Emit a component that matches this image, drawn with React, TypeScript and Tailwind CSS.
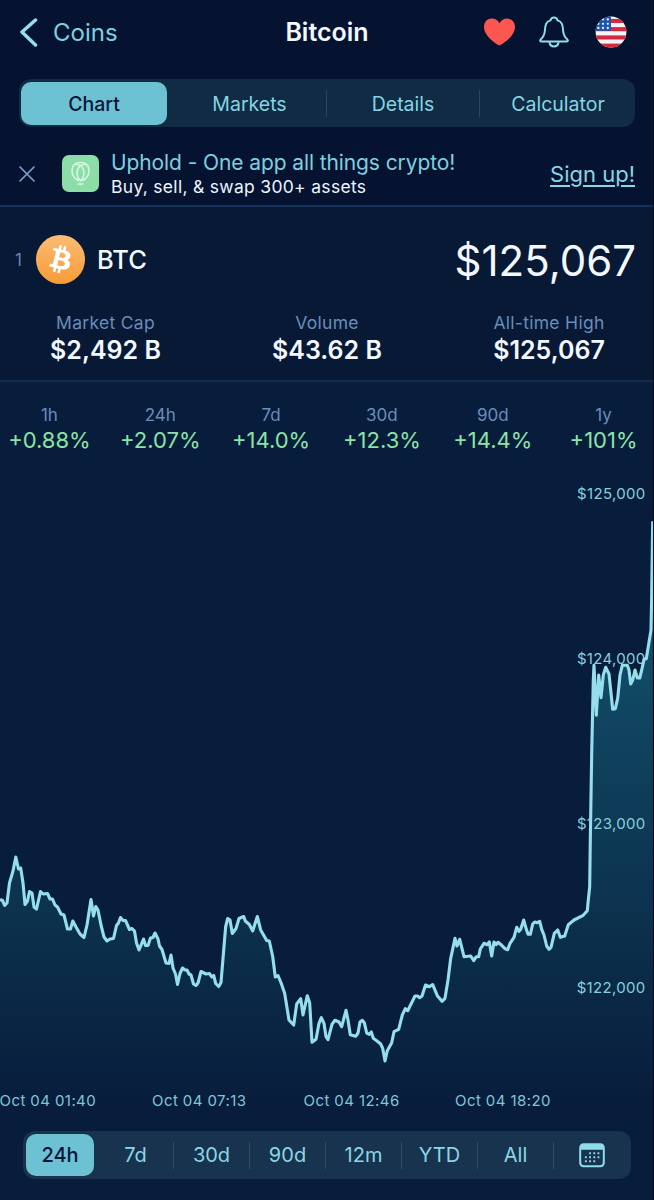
import React from "react";
import { SiBitcoin } from "react-icons/si";
import clsx from "clsx";

const TABS = ["Chart", "Markets", "Details", "Calculator"];

const STATS = [
  { label: "Market Cap", value: "$2,492 B" },
  { label: "Volume", value: "$43.62 B" },
  { label: "All-time High", value: "$125,067" },
];

const CHANGES = [
  { label: "1h", value: "+0.88%" },
  { label: "24h", value: "+2.07%" },
  { label: "7d", value: "+14.0%" },
  { label: "30d", value: "+12.3%" },
  { label: "90d", value: "+14.4%" },
  { label: "1y", value: "+101%" },
];

const RANGES = ["24h", "7d", "30d", "90d", "12m", "YTD", "All"];

const Y_LABELS = [
  { text: "$125,000", y: 499 },
  { text: "$124,000", y: 664 },
  { text: "$123,000", y: 828.5 },
  { text: "$122,000", y: 993 },
];

const X_LABELS = [
  { text: "Oct 04 01:40", x: -0.5 },
  { text: "Oct 04 07:13", x: 152 },
  { text: "Oct 04 12:46", x: 303.5 },
  { text: "Oct 04 18:20", x: 455 },
];

const LINE =
  "0,899.5 2.5,900.5 4.7,905.3 7,903 9.5,883 13,871 15.8,857 18.5,869 20.7,868 23,883 25,904.5 27.5,901 29.5,891.5 32,893 34,907 36.5,909 40.5,891.5 43,894 47.5,893.5 50,899 52.5,899 55,905 57.5,907 61,914 64,915 67.5,929 70.5,929 72.8,921 76,927 80,934 84,937.5 87,925 91,899.5 93.5,916 95.8,906.5 98,910 101,925 104,937 107,941 110,939 113.5,938.5 116.5,925.5 118.5,923 120.5,917.5 123,920.5 125.5,920.5 129.5,929.5 132,928.5 134.5,931 136.5,943 139,950 143.5,939 145.5,945.5 148,945.5 150.5,938 153,937.5 155,933 158,939 159.5,946 162,949.5 166,963 169,963.5 171,955 173,968 175.5,974 177.5,984.5 180,973.5 182.5,968 185,970 187,970 189,974 191,975 193.5,984 196,985.5 198,983 201,971.5 206,974 209.5,973.5 " +
  "211.7,977 213.7,975.5 215.7,983.5 218.7,986.5 221,982.5 224,946.5 225.7,926.5 227.7,918.5 230,920 232.3,933.5 236,928.5 239,918.5 243.7,916.5 245.3,921 249.3,924.5 252.7,931 257.3,916.5 260.7,930 266.7,940.5 269.3,941 272.7,956.5 275.3,977 278,975.5 281.3,983.5 284.7,993.5 289,1020 293.7,1025 296.7,1004 300.7,998.7 303,1015 307.3,995.7 309.7,1003 312,1042.3 316,1039.3 319,1023.3 321.3,1017.7 324,1023.3 326,1036.7 328,1039.7 332,1024.3 335,1020.3 339,1022 341.7,1026.7 346,1010.3 348,1020 350.3,1034.7 355.7,1036.3 358,1033 360,1022 362.3,1020.3 364.3,1022.7 366.7,1033 369.3,1034.3 371.3,1032 373.3,1038.3 376.7,1040.7 380.7,1044 382.7,1048.3 385,1061 387.3,1050.7 391.7,1042.7 394,1031.7 398.7,1029.3 402.3,1015 405.3,1008.7 407.7,1010.7 415,996 417.5,996 419.7,997.7 422,996 425.5,985 " +
  "429.3,986.7 432.7,984.7 437.3,995.7 442,1001.3 445,998.3 448,980 450.7,958.3 455,938.3 457,946 459.7,939.3 464,956.7 470.7,956 473.7,960.7 476.3,956.7 478.7,956.7 480.3,949 484,943.3 487.3,944.7 489.3,942 491.7,956 494,942 496,944.7 498,942.3 501.7,945.3 505,948.7 507.7,949.7 510,943.3 514,937.3 516.7,927.3 519,931.3 520.7,929.3 523.7,920 526,928.3 528,934.3 530.3,934.3 532.7,924 534.7,922 537.3,922.7 539.7,921.3 541.7,929.3 544,935 546.7,946 549,949.3 551,947.3 554.3,933.3 557.7,930 560.3,937.3 564.7,936 568.3,924.7 574,920 582.7,915.7 587.3,910.7 588,903 589.7,886.7 590.3,840 591.7,753.3 593.3,680 594,665.3 596.3,715.3 598.7,675 601,697.7 603.3,675 605.7,667.3 609,674 611,693 612.7,709.3 615.3,708.7 617.7,698.3 620,675 622.3,665.3 627.3,665.3 629,670 630.7,684 632.7,680 635,670 637.3,678 639.7,678 641.7,670 644,659.3 646.3,658.7 651,630 651.6,600 652.7,521.3";

const BellIcon = () => (
  <svg width="30" height="32" viewBox="0 0 30 32" fill="none" stroke="#8fdcea" strokeWidth="2" strokeLinejoin="round">
    <path d="M2.2 25.4C1 25.4 .8 24.4 1.6 23.6C4.2 21.2 5.6 19 5.9 14.5C6.2 9 7 5.6 11.4 4.4C11.9 2.4 13.2 1.5 15 1.5S18.1 2.4 18.6 4.4C23 5.6 23.8 9 24.1 14.5C24.4 19 25.8 21.2 28.4 23.6C29.2 24.4 29 25.4 27.8 25.4Z" />
    <path d="M10.4 26C10.8 28.8 12.6 30.4 15 30.4S19.2 28.8 19.6 26" />
  </svg>
);

const HeartIcon = () => (
  <svg width="31" height="28" viewBox="0 0 31 28" fill="#fc5650">
    <path d="M15.5 27.4C14.6 27.4 0 18.8 0 8.9C0 4 3.4.6 7.9.6C11.3.6 13.9 2.3 15.5 5.2C17.1 2.3 19.7.6 23.1.6C27.6.6 31 4 31 8.9C31 18.8 16.4 27.4 15.5 27.4Z" />
  </svg>
);

const FlagIcon = () => (
  <svg width="32" height="32" viewBox="0 0 32 32">
    <clipPath id="flag">
      <circle cx="16" cy="16" r="15.4" />
    </clipPath>
    <g clipPath="url(#flag)">
      <rect width="32" height="32" fill="#f4f4f8" />
      {[2.9, 11.1, 19.4, 27.6].map((y) => (
        <rect key={y} y={y} width="32" height="4.1" fill="#d8283f" />
      ))}
      <rect width="16" height="14.8" fill="#1a56ac" />
      {[3.4, 7.8, 12].map((y) =>
        [3.4, 8, 12.8].map((x) => <circle key={`${x}-${y}`} cx={x} cy={y} r="1.15" fill="#e6efff" />)
      )}
    </g>
  </svg>
);

const CalendarIcon = () => (
  <svg width="26" height="25" viewBox="0 0 26 25" fill="none">
    <rect x="1.2" y="1.2" width="23.6" height="22" rx="3.4" stroke="#8fdcea" strokeWidth="2" />
    <path d="M1 6.8V4.5C1 2.4 2.4 1 4.5 1H21.5C23.6 1 25 2.4 25 4.5V6.8Z" fill="#8fdcea" />
    <g fill="#8fdcea">
      {[10.2, 14.2, 18.2].map((y, row) =>
        [6.8, 11, 15.2, 19.4].map((x, col) =>
          (row === 0 && col === 0) || (row === 2 && col === 3) ? null : (
            <rect key={`${x}-${y}`} x={x - 0.9} y={y - 0.9} width="1.9" height="1.9" />
          )
        )
      )}
    </g>
  </svg>
);

const PriceChart = () => (
  <svg className="block h-[650px] w-[654px] shrink-0" viewBox="0 465 654 650">
    <defs>
      <linearGradient id="area" gradientUnits="userSpaceOnUse" x1="0" y1="521" x2="0" y2="1100">
        <stop offset="0" stopColor="#2aa0b8" stopOpacity="0.45" />
        <stop offset="0.25" stopColor="#229ab0" stopOpacity="0.36" />
        <stop offset="0.65" stopColor="#1c8c9c" stopOpacity="0.2" />
        <stop offset="1" stopColor="#1c8c9c" stopOpacity="0" />
      </linearGradient>
    </defs>
    <polygon points={`${LINE} 653,1100 0,1100`} fill="url(#area)" />
    <g fill="#87cfdf" fontSize="15" letterSpacing="0.32">
      {Y_LABELS.map(({ text, y }) => (
        <text key={text} x="645.6" y={y} textAnchor="end">
          {text}
        </text>
      ))}
    </g>
    <g fill="#7fc6d8" fontSize="15" letterSpacing="0.42">
      {X_LABELS.map(({ text, x }) => (
        <text key={text} x={x} y="1106">
          {text}
        </text>
      ))}
    </g>
    <polyline points={LINE} fill="none" stroke="#95deeb" strokeWidth="3.1" strokeLinejoin="round" />
  </svg>
);

export default function App() {
  return (
    <div className="relative flex h-[1200px] w-[654px] flex-col overflow-hidden bg-[#081d3c] font-['Inter',sans-serif]">
      <div className="h-[207px] shrink-0 border-b-2 border-[#17305a] bg-[#051330]">
        {/* Header */}
        <header className="grid h-[79px] grid-cols-3 items-start px-[19px] pt-4">
          <div className="flex h-8 items-center gap-[15px] text-[#7fcfe0]">
            <svg width="19" height="30" viewBox="0 0 19 30" fill="none">
              <path d="M16.5 3L3 15L16.5 28" stroke="#95deeb" strokeWidth="3.5" strokeLinecap="round" strokeLinejoin="round" />
            </svg>
            <span className="pt-px text-[24px] leading-8">Coins</span>
          </div>
          <h1 className="text-center text-[25px] leading-8 font-semibold text-[#f2f8ff]">Bitcoin</h1>
          <div className="flex h-8 items-center justify-end pr-2">
            <HeartIcon />
            <span className="ml-6">
              <BellIcon />
            </span>
            <span className="ml-[26px]">
              <FlagIcon />
            </span>
          </div>
        </header>

        {/* Section tabs */}
        <div className="mr-[19px] ml-[19px] flex h-12 items-center rounded-xl bg-[#102b43] p-0.5">
          {TABS.map((tab, i) => (
            <React.Fragment key={tab}>
              {i > 1 && <div className="h-[27px] w-px shrink-0 bg-[#2b4760]" />}
              <button
                className={clsx(
                  "h-[43px] shrink-0 text-[19.5px] leading-[44px]",
                  i === 0 && "w-[146px] rounded-[10px] bg-[#6cc2d2] font-medium text-[#07163a]",
                  i === 1 && "ml-1.5 w-[153px] text-[#85d5e4]",
                  i === 2 && "w-[152px] text-[#85d5e4]",
                  i === 3 && "w-[153px] pl-[3px] text-[#85d5e4]"
                )}
              >
                {tab}
              </button>
            </React.Fragment>
          ))}
        </div>

        {/* Sponsor banner */}
        <div className="flex h-[78px] items-center pt-[15px] pr-[19px] pl-[19px]">
          <svg width="16" height="16" viewBox="0 0 16 16" className="shrink-0" stroke="#7d9cc8" strokeWidth="1.7" strokeLinecap="round">
            <path d="M1 1L15 15M15 1L1 15" />
          </svg>
          <svg width="37" height="37" viewBox="0 0 37 37" className="-mt-[1px] ml-[27px] shrink-0" fill="none" stroke="#d7fae3" strokeWidth="1.5" strokeLinecap="round">
            <rect width="37" height="37" rx="7" fill="#8ddda9" stroke="none" />
            <path d="M14.3 24.2C8 19.5 8.2 7.6 18.5 7.6S29 19.5 22.7 24.2" />
            <path d="M13.4 9.6C22 8.6 24.6 19.5 18.5 26C12.4 19.5 15 8.6 23.6 9.6M14.3 24.2L16.2 25.6M22.7 24.2L20.8 25.6M16.2 29H20.8" />
          </svg>
          <div className="ml-3 flex-1">
            <p className="text-[21px] leading-[25px] tracking-[-0.1px] text-[#7fcfe0]">Uphold - One app all things crypto!</p>
            <p className="text-[17.5px] leading-[23px] tracking-[0.3px] text-[#eef5ff]">Buy, sell, &amp; swap 300+ assets</p>
          </div>
          <a className="text-[22px] leading-7 text-[#8ad6e6] underline decoration-[1.5px] underline-offset-[3px]">Sign up!</a>
        </div>
      </div>

      {/* Coin summary */}
      <section className="h-[175px] shrink-0 border-b-2 border-[#162b4b] bg-[#071935]">
        <div className="flex items-center pt-7 pr-[18px] pl-[15px]">
          <span className="w-[21px] pt-0.5 text-[17px] text-[#6688b4]">1</span>
          <span className="relative flex size-[49px] items-center justify-center rounded-full bg-linear-to-b from-[#fbbd76] to-[#f79a35]">
            <span className="absolute inset-[9px] rounded-full bg-white" />
            <SiBitcoin className="relative size-[45px]" style={{ fill: "url(#coin)" }} />
            <svg className="absolute size-0">
              <linearGradient id="coin" x1="0" y1="0" x2="0" y2="1">
                <stop offset="0" stopColor="#fbba71" />
                <stop offset="1" stopColor="#f79d3a" />
              </linearGradient>
            </svg>
          </span>
          <span className="ml-3 pt-0.5 text-[25.5px] font-medium text-[#f2f8ff]">BTC</span>
          <span className="ml-auto pt-0.5 text-[42px] leading-[46px] text-[#f2f8ff]">$125,067</span>
        </div>
        <div className="grid grid-cols-3 pt-[27px] text-center">
          {STATS.map(({ label, value }, i) => (
            <div key={label} className={clsx(i === 0 && "-ml-[7px]", i === 2 && "-mr-2")}>
              <div className="text-[17.5px] leading-6 tracking-[0.3px] text-[#6a8dba]">{label}</div>
              <div className="text-[25px] leading-[30px] font-semibold text-[#f2f8ff]">{value}</div>
            </div>
          ))}
        </div>
      </section>

      <section className="-mr-[5px] -ml-1.5 grid h-[83px] shrink-0 grid-cols-6 pt-[21px] text-center">
        {CHANGES.map(({ label, value }) => (
          <div key={label}>
            <div className="text-[17px] leading-6 text-[#6a8dba]">{label}</div>
            <div className="text-[22px] leading-[26px] text-[#8be4a5]">{value}</div>
          </div>
        ))}
      </section>

      <PriceChart />

      {/* Range picker */}
      <div className="mt-4 mr-[23px] ml-[23px] flex h-12 shrink-0 items-center rounded-xl bg-[#17334e] p-[3px]">
        {RANGES.map((range, i) => (
          <React.Fragment key={range}>
            {i > 1 && <div className="h-[27px] w-px shrink-0 bg-[#304b66]" />}
            <button
              className={clsx(
                "h-[42px] shrink-0 text-[20px] leading-[42px]",
                i === 0
                  ? "w-[68px] rounded-[10px] bg-[#6cc2d2] font-medium text-[#07163a]"
                  : "w-[75px] text-[#8ad6e6]",
                i === 1 && "ml-1"
              )}
            >
              {range}
            </button>
          </React.Fragment>
        ))}
        <div className="h-[27px] w-px shrink-0 bg-[#304b66]" />
        <button className="flex flex-1 justify-center pl-0.5">
          <CalendarIcon />
        </button>
      </div>

      <div className="absolute inset-y-0 right-0 w-px bg-[#030b1c]" />
    </div>
  );
}
